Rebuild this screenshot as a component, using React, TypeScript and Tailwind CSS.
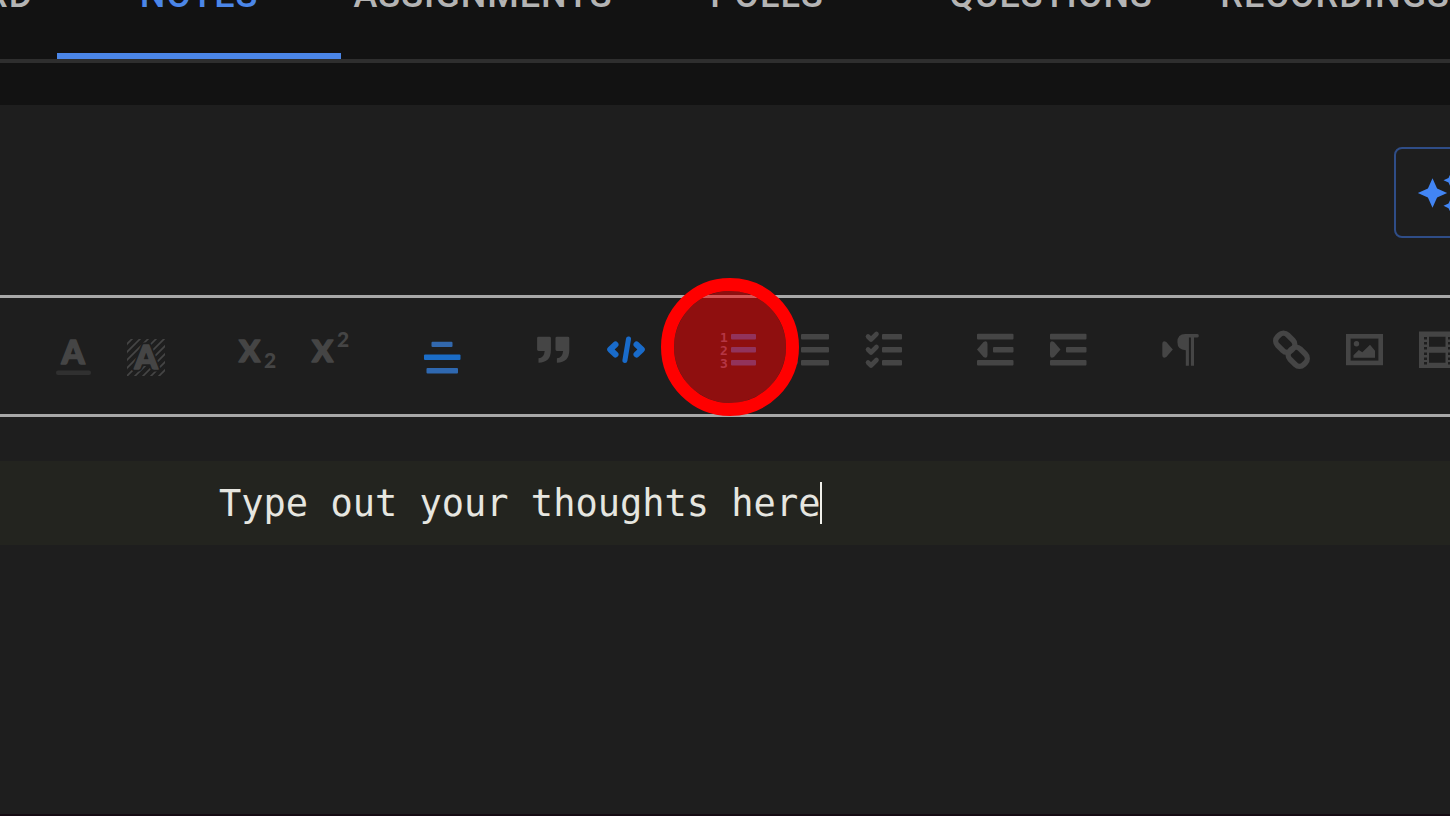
import { useState, type ReactNode } from "react";

const TABS = ["Whiteboard", "Notes", "Assignments", "Polls", "Questions", "Recordings"];

function Icon({ children }: { children: ReactNode }) {
    return (
        <svg className="size-12 overflow-visible" viewBox="0 0 48 48" fill="currentColor" aria-hidden="true">
            {children}
        </svg>
    );
}

// Three stacked bars shared by the list icons
function Bars({ x }: { x: number }) {
    return (
        <>
            <rect x={x} y="2" width={42 - x} height="5.4" rx="1" />
            <rect x={x} y="15" width={42 - x} height="5.4" rx="1" />
            <rect x={x} y="28" width={42 - x} height="5.4" rx="1" />
        </>
    );
}

function TextColorIcon() {
    return (
        <Icon>
            <text
                x="24"
                y="32"
                textAnchor="middle"
                stroke="currentColor"
                strokeWidth="1.6"
                strokeLinejoin="round"
                className="font-['Lato'] text-[33px] font-black"
            >
                A
            </text>
            <rect x="7" y="38.5" width="35" height="4.5" rx="2" fill="#303030" />
        </Icon>
    );
}

function BackgroundColorIcon() {
    return (
        <Icon>
            <defs>
                <clipPath id="hatch">
                    <rect x="5" y="7" width="38" height="37" />
                </clipPath>
            </defs>
            <g clipPath="url(#hatch)" stroke="currentColor" strokeWidth="1.7">
                {[17, 25, 33, 41, 49, 57, 65, 73, 81].map((n) => (
                    <line key={n} x1={n - 50} y1="50" x2={n} y2="0" />
                ))}
            </g>
            <g textAnchor="middle" strokeLinejoin="round" className="font-['Lato'] text-[33px] font-black">
                <text x="24" y="37" stroke="#1e1e1e" strokeWidth="5" aria-hidden="true">A</text>
                <text x="24" y="37" stroke="currentColor" strokeWidth="1.6">A</text>
            </g>
        </Icon>
    );
}

function ScriptIcon({ digitY }: { digitY: number }) {
    return (
        <Icon>
            <text
                x="6"
                y="30"
                stroke="currentColor"
                strokeWidth="1.6"
                strokeLinejoin="round"
                className="font-['Lato'] text-[31px] font-black"
            >
                X
            </text>
            <text x="31" y={digitY} className="font-['Lato'] text-[21px] font-black">2</text>
        </Icon>
    );
}

function AlignIcon() {
    return (
        <Icon>
            <rect x="13.500" y="9.700" width="21" height="5.400" rx="1" fill="#3268ad" />
            <rect x="6" y="22.600" width="36.500" height="5.400" rx="1" fill="#1b6dc8" />
            <rect x="8.500" y="36" width="31.500" height="5.400" rx="1" fill="#2f68b0" />
        </Icon>
    );
}

function QuoteIcon() {
    return (
        <Icon>
            <path d="M9.5 4.7h11q1.4 0 1.4 1.4v12q0 12.6-12.4 12.6v-4.5q5.6 0 6.2-7.3h-6.200q-1.4 0-1.4-1.4V6.100q0-1.4 1.4-1.4z" />
            <path d="M27.9 4.700h11q1.4 0 1.4 1.4v12q0 12.6-12.4 12.6v-4.5q5.6 0 6.2-7.3h-6.200q-1.4 0-1.4-1.4V6.100q0-1.4 1.4-1.4z" />
        </Icon>
    );
}

function CodeIcon() {
    return (
        <Icon>
            <g fill="none" stroke="#196bca" strokeLinecap="round" strokeLinejoin="round">
                <path d="M13.500 12.500 8.200 17.500l5.300 5M34.500 12.500l5.300 5-5.300 5" strokeWidth="6" />
                <path d="M26.500 7 22.900 28.500" strokeWidth="5" />
            </g>
        </Icon>
    );
}

function OrderedListIcon() {
    return (
        <Icon>
            <g fill="#2467b8">
                <Bars x={17} />
            </g>
            <g fill="#6a6a88" className="font-['DejaVu_Sans_Mono'] text-[13px] font-bold">
                <text x="6" y="10">1</text>
                <text x="6" y="23">2</text>
                <text x="6" y="36">3</text>
            </g>
        </Icon>
    );
}

function BulletListIcon() {
    return (
        <Icon>
            <Bars x={14} />
            <circle cx="8" cy="4.5" r="2.7" />
            <circle cx="8" cy="17.5" r="2.7" />
            <circle cx="8" cy="30.5" r="2.7" />
        </Icon>
    );
}

function CheckListIcon() {
    return (
        <Icon>
            <Bars x={22} />
            <g fill="none" stroke="currentColor" strokeWidth="4.6" strokeLinecap="round" strokeLinejoin="round">
                <path d="M8 4.500 11 7.500 16.500 2" />
                <path d="M8 17.500 11 20.500 16.500 15" />
                <path d="M8 30.500 11 33.500 16.500 28" />
            </g>
        </Icon>
    );
}

function IndentIcon({ outdent = false }: { outdent?: boolean }) {
    return (
        <Icon>
            <rect x="6" y="1.8" width="36.5" height="5.6" rx="1" />
            <rect x="22" y="15" width="20.5" height="5.6" rx="1" />
            <rect x="6" y="28" width="36.5" height="5.6" rx="1" />
            {outdent ? (
                <path d="M6 17.500 12.500 10q4-2 4 2v11q0 4-4 2z" />
            ) : (
                <path d="M16.500 17.500 10 10q-4-2-4 2v11q0 4 4 2z" />
            )}
        </Icon>
    );
}

function DirectionIcon() {
    return (
        <Icon>
            <path d="M16.800 17.500 10.300 10q-4-2-4 2v11q0 4 4 2z" />
            <path d="M29.300 2H41.500q1.300 0 1.300 1.800t-1.300 1.800H38v28.100h-3.100V5.600h-2V33.700h-3.100V18.200q-8.400-.2-8.400-8.200 0-8 7.900-8z" />
        </Icon>
    );
}

function LinkIcon() {
    return (
        <Icon>
            <g fill="none" stroke="currentColor" strokeWidth="5.4">
                <rect x="8.5" y="3.5" width="19.5" height="14.5" rx="6" transform="rotate(45 18.25 10.75)" />
                <rect x="21" y="17.500" width="19.5" height="14.5" rx="6" transform="rotate(45 30.75 24.75)" />
            </g>
        </Icon>
    );
}

function ImageIcon() {
    return (
        <Icon>
            <rect x="8.3" y="4.3" width="32.4" height="26.6" fill="none" stroke="currentColor" strokeWidth="4.6" />
            <circle cx="16.5" cy="11.7" r="2.7" />
            <path d="M13.500 25.700v-2.500l5.300-5.200 3.500 2.200 7.700-7.400 5 6v6.900z" />
        </Icon>
    );
}

function VideoIcon() {
    return (
        <Icon>
            <path
                fillRule="evenodd"
                d="M6-.600H43V36H6zM16 4.700v10H32.500v-10zM16 20.700v10H32.500v-10zM11 5h3v2.500H11zM11 10h3v2.500H11zM11 15h3v2.500H11zM11 20.500h3v2.500H11zM11 25.500h3v2.500H11zM11 30h3v2.500H11zM35 5h3v2.500h-3zM35 10h3v2.500h-3zM35 15h3v2.500h-3zM35 20.500h3v2.500h-3zM35 25.500h3v2.500h-3zM35 30h3v2.500h-3z"
            />
        </Icon>
    );
}

type Tool = { label: string; icon: ReactNode; highlighted?: boolean };

const TOOL_GROUPS: Tool[][] = [
    [
        { label: "Text color", icon: <TextColorIcon /> },
        { label: "Background color", icon: <BackgroundColorIcon /> },
    ],
    [
        { label: "Subscript", icon: <ScriptIcon digitY={35.5} /> },
        { label: "Superscript", icon: <ScriptIcon digitY={15} /> },
    ],
    [{ label: "Align", icon: <AlignIcon /> }],
    [
        { label: "Quote", icon: <QuoteIcon /> },
        { label: "Code", icon: <CodeIcon /> },
    ],
    [
        { label: "Numbered list", icon: <OrderedListIcon />, highlighted: true },
        { label: "Bullet list", icon: <BulletListIcon /> },
        { label: "Check list", icon: <CheckListIcon /> },
    ],
    [
        { label: "Decrease indent", icon: <IndentIcon outdent /> },
        { label: "Increase indent", icon: <IndentIcon /> },
    ],
    [{ label: "Text direction", icon: <DirectionIcon /> }],
    [
        { label: "Link", icon: <LinkIcon /> },
        { label: "Image", icon: <ImageIcon /> },
        { label: "Video", icon: <VideoIcon /> },
    ],
];

function Tabs() {
    const [active, setActive] = useState("Notes");

    return (
        <nav className="overflow-hidden border-b-4 border-[#2e2e2e]">
            <div className="-mt-10 -ml-[227px] flex">
                {TABS.map((tab) => (
                    <button
                        key={tab}
                        type="button"
                        onClick={() => setActive(tab)}
                        className={`flex h-[99px] w-[284px] shrink-0 items-center justify-center border-b-6 pb-6 font-['Roboto',sans-serif] text-4xl/9 font-medium tracking-[1px] uppercase ${
                            tab === active ? "border-[#4b86e8] text-[#4b86e8]" : "border-transparent text-[#b4b4b4]"
                        }`}
                    >
                        {tab}
                    </button>
                ))}
            </div>
        </nav>
    );
}

function Toolbar() {
    return (
        <div className="overflow-x-clip border-y-3 border-[#a8a8a8]">
            <div role="toolbar" className="-mr-6 flex h-[116px] justify-between pl-9 text-[#454545]">
                {TOOL_GROUPS.map((group) => (
                    <div key={group[0].label} className="flex shrink-0">
                        {group.map(({ label, icon, highlighted }) => (
                            <div key={label} className={highlighted ? "relative flex" : "flex"}>
                                <button type="button" aria-label={label} className="flex w-[73px] items-center justify-center">
                                    {icon}
                                </button>
                                {/* Click marker */}
                                {highlighted && (
                                    <span className="pointer-events-none absolute -top-5 -left-10 z-10 size-[138px] rounded-full border-13 border-[#ff0000] bg-[#ff0000]/50 bg-clip-padding" />
                                )}
                            </div>
                        ))}
                    </div>
                ))}
            </div>
        </div>
    );
}

export default function App() {
    const [note, setNote] = useState("Type out your thoughts here");

    return (
        <div className="flex min-h-screen flex-col overflow-x-hidden border-b-2 border-[#150b12] bg-[#121212]">
            <Tabs />
            <main className="mt-[42px] grow bg-[#1e1e1e]">
                <div className="flex h-[190px] items-start justify-end overflow-hidden pt-[42px]">
                    <button
                        type="button"
                        aria-label="Generate"
                        className="-mr-[144px] flex h-[91px] w-[200px] shrink-0 items-center rounded-lg border-2 border-[#2f4d87] pl-5 text-[#4285f4]"
                    >
                        <svg className="size-11" viewBox="0 0 24 24" fill="currentColor" aria-hidden="true">
                            <path d="M19 1l-1.260 2.750L15 5l2.740 1.260L19 9l1.250-2.740L23 5l-2.750-1.250M9 4L6.500 9.500 1 12l5.500 2.500L9 20l2.500-5.500L17 12l-5.500-2.500M19 15l-1.260 2.740L15 19l2.740 1.250L19 23l1.250-2.750L23 19l-2.750-1.260" />
                        </svg>
                    </button>
                </div>
                <Toolbar />
                <div className="mt-11 flex h-21 items-center bg-[#23241f] pl-[219px]">
                    <input
                        aria-label="Note"
                        value={note}
                        onChange={(e) => setNote(e.target.value)}
                        className="h-12 w-[601px] bg-transparent pt-0.5 font-['DejaVu_Sans_Mono',monospace] text-[37px] text-[#e6e6e0] outline-none"
                    />
                    <span className="h-[42px] w-[2px] bg-[#f0f0ea]" />
                </div>
            </main>
        </div>
    );
}
